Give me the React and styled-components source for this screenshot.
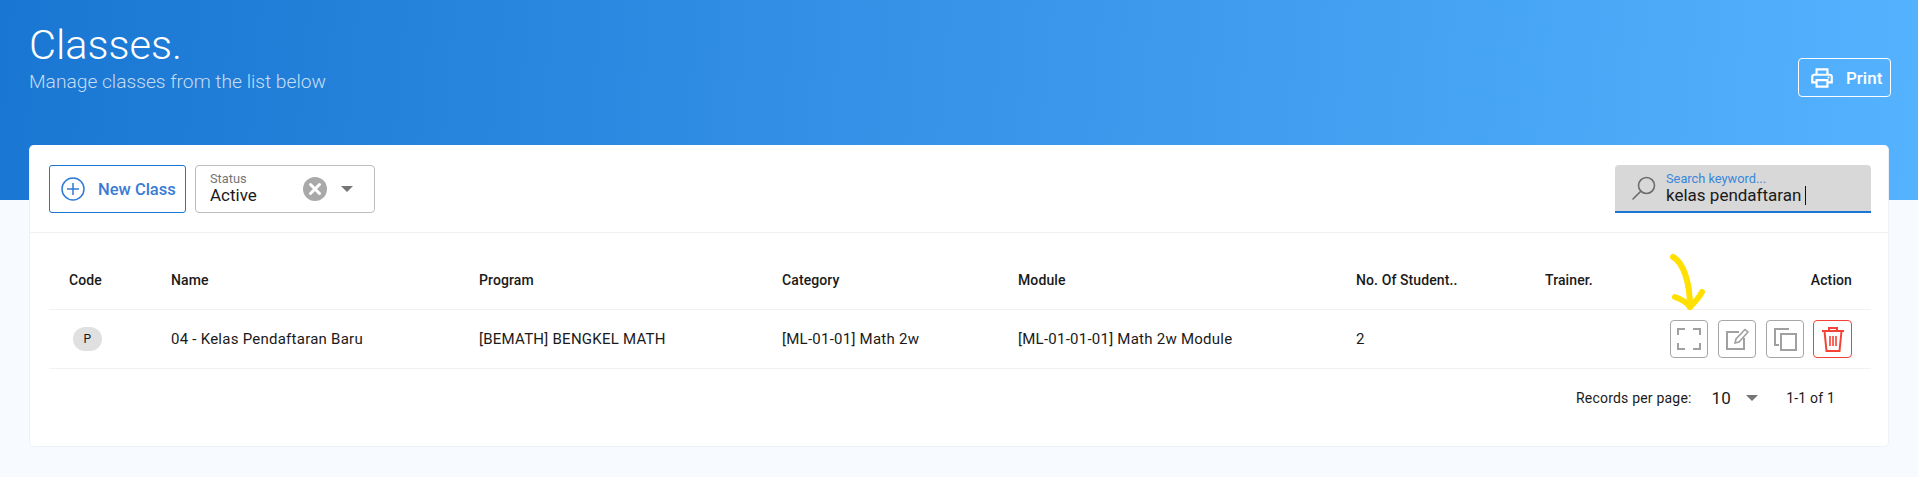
import React from "react";
import styled, {createGlobalStyle} from "styled-components";

const GlobalStyle = createGlobalStyle`
  html, body {
    margin: 0;
    padding: 0;
    background: #f7fbff;
    font-family: Roboto, "Liberation Sans", sans-serif;
    color: #1a1a1a;
    overflow: hidden;
  }
`

const Hero = styled.header`
  height: 200px;
  box-sizing: border-box;
  padding: 22px 27px 0 29px;
  display: flex;
  justify-content: space-between;
  align-items: flex-start;
  background: linear-gradient(95deg, #1976d2 0%, #54b2ff 100%);
  color: #fff;
`

const Title = styled.h1`
  margin: 0;
  font-size: 41.5px;
  line-height: 46px;
  font-weight: 300;
`

const Subtitle = styled.p`
  margin: 3px 0 0;
  font-size: 19.2px;
  line-height: 22px;
  font-weight: 300;
  color: rgba(255, 255, 255, 0.75);
`

const PrintButton = styled.button`
  margin-top: 36px;
  width: 93px;
  height: 39px;
  display: flex;
  align-items: center;
  gap: 11px;
  padding: 0 0 0 10px;
  background: transparent;
  border: 1px solid #fff;
  border-radius: 4px;
  color: #fff;
  font: 500 17px Roboto, sans-serif;
`

const Card = styled.main`
  margin: -55px 29px 0;
  height: 302px;
  box-sizing: border-box;
  background: #fff;
  border: 1px solid #eef1f5;
  border-top: 0;
  border-radius: 5px;
`

const Toolbar = styled.div`
  height: 88px;
  box-sizing: border-box;
  padding: 20px 17px 0 19px;
  display: flex;
  align-items: flex-start;
  gap: 9px;
  border-bottom: 1px solid #f1f2f4;
`

const NewButton = styled.button`
  width: 137px;
  height: 48px;
  display: flex;
  align-items: center;
  gap: 13px;
  padding: 0 0 0 11px;
  box-sizing: border-box;
  background: #fff;
  border: 1px solid #1976d2;
  border-radius: 3px;
  color: #3a7bd5;
  font: 500 16.5px Roboto, sans-serif;
`

const Select = styled.div`
  width: 180px;
  height: 48px;
  box-sizing: border-box;
  padding: 0 21px 0 14px;
  display: flex;
  align-items: center;
  border: 1px solid #bdbdbd;
  border-radius: 4px;
`

const SelectValue = styled.div`
  flex: 1;
  padding-bottom: 2px;
  font-size: 17px;
  line-height: 20px;
  small {
    display: block;
    font-size: 12.8px;
    line-height: 13px;
    color: #757575;
  }
`

const ClearDot = styled.span`
  width: 24px;
  height: 24px;
  display: flex;
  align-items: center;
  justify-content: center;
  border-radius: 50%;
  background: #a9a9a9;
  margin-right: 14px;
`

const Caret = styled.span`
  width: 0;
  height: 0;
  border-left: 6px solid transparent;
  border-right: 6px solid transparent;
  border-top: 6px solid #757575;
`

const SearchBox = styled.div`
  margin-left: auto;
  width: 256px;
  height: 48px;
  box-sizing: border-box;
  padding: 0 0 0 17px;
  display: flex;
  align-items: center;
  gap: 10px;
  background: #d8d8d8;
  border-bottom: 2px solid #1976d2;
  border-radius: 4px 4px 0 0;
`

const SearchText = styled.div`
  font-size: 17px;
  line-height: 20px;
  small {
    display: block;
    font-size: 12.8px;
    line-height: 13px;
    color: #3a86d8;
  }
  i {
    display: inline-block;
    width: 1px;
    height: 19px;
    margin-left: 4px;
    vertical-align: -4px;
    background: #111;
  }
`

const Table = styled.section`
  position: relative;
  margin: 0 17px 0 19px;
`

const Row = styled.div`
  display: grid;
  grid-template-columns: 102px 308px 303px 236px 338px 189px 100px 1fr;
  align-items: center;
  box-sizing: border-box;
  height: ${p => p.$head ? "77px" : "59px"};
  padding: ${p => p.$head ? "18px" : "0"} 19px 0 20px;
  border-bottom: 1px solid #f1f2f4;
  font-size: ${p => p.$head ? "14px" : "15px"};
  font-weight: ${p => p.$head ? 500 : 400};
  letter-spacing: ${p => p.$head ? "0.1px" : "0.25px"};
`

const End = styled.div`
  display: flex;
  justify-content: flex-end;
  gap: 10px;
`

const Chip = styled.span`
  margin-left: 4px;
  width: 29px;
  height: 24px;
  display: flex;
  align-items: center;
  justify-content: center;
  border-radius: 12px;
  background: #e0e0e0;
  font-size: 12px;
`

const IconButton = styled.button`
  width: ${p => p.$danger ? "39px" : "38px"};
  height: 38px;
  margin-left: ${p => p.$danger ? "-1px" : "0"};
  padding: 0;
  display: flex;
  align-items: center;
  justify-content: center;
  background: #fff;
  border: 1px solid ${p => p.$danger ? "#f44336" : "#a6a6a6"};
  border-radius: 4px;
  color: ${p => p.$danger ? "#f44336" : "#a0a0a0"};
`

const Arrow = styled.svg`
  position: absolute;
  left: 1618px;
  top: 19px;
  width: 50px;
  height: 70px;
`

const Footer = styled.div`
  height: 57px;
  display: flex;
  align-items: center;
  justify-content: flex-end;
  padding-right: 36px;
  font-size: 14px;
  letter-spacing: 0.2px;
`

const PageSize = styled.span`
  margin: 0 28px 0 20px;
  display: flex;
  align-items: center;
  gap: 15px;
  font-size: 17px;
`

const Printer = () => (
  <svg width="26" height="26" viewBox="0 0 24 24" fill="currentColor">
    <path d="M19 8h-1V3H6v5H5a3 3 0 0 0-3 3v6h4v4h12v-4h4v-6a3 3 0 0 0-3-3zM8 5h8v3H8V5zm8 14H8v-4h8v4zm2-4v-2H6v2H4v-4a1 1 0 0 1 1-1h14a1 1 0 0 1 1 1v4h-2z" />
    <circle cx="18" cy="11.5" r="1" />
  </svg>
)

const PlusCircle = () => (
  <svg width="24" height="24" viewBox="0 0 24 24" fill="none" stroke="#2f7ad6" strokeWidth="1.5">
    <circle cx="12" cy="12" r="11" />
    <path d="M12 6v12M6 12h12" />
  </svg>
)

const Cross = () => (
  <svg width="14" height="14" viewBox="0 0 14 14" stroke="#fff" strokeWidth="3" strokeLinecap="round">
    <path d="M2.500 2.500l9 9M11.500 2.500l-9 9" />
  </svg>
)

const Magnify = () => (
  <svg width="24" height="24" viewBox="0 0 24 24" fill="none" stroke="#6b6b6b" strokeWidth="1.6">
    <circle cx="14.500" cy="9.500" r="8" />
    <path d="M8.800 15.200L1 23" strokeLinecap="round" />
  </svg>
)

const Expand = () => (
  <svg width="24" height="24" viewBox="0 0 24 24" fill="none" stroke="currentColor" strokeWidth="2">
    <path d="M1 8V2h7M16 2h7v6M23 16v6h-7M8 22H1v-6" />
  </svg>
)

const Edit = () => (
  <svg width="24" height="24" viewBox="0 0 24 24" fill="none" stroke="currentColor" strokeWidth="2">
    <path d="M14 5H2v17h17V11" />
    <path d="M10 16l1-4L20 2.500l3 2.500-9 10z" strokeWidth="1.600" />
  </svg>
)

const Copy = () => (
  <svg width="24" height="24" viewBox="0 0 24 24" fill="none" stroke="currentColor" strokeWidth="2">
    <path d="M16 2H2v16h4" />
    <path d="M8 7h15v16H8z" />
  </svg>
)

const Trash = () => (
  <svg width="24" height="26" viewBox="0 0 24 26" fill="none" stroke="currentColor" strokeWidth="2">
    <path d="M1 5h22M8 5V2h8v3M3.500 5l2 20h13l2-20" />
    <path d="M9 10v10M12 10v10M15 10v10" strokeWidth="1.600" />
  </svg>
)

const headers = ["Code", "Name", "Program", "Category", "Module", "No. Of Student..", "Trainer."]

const App = () => {
  return <>
    <GlobalStyle />
    <Hero>
      <div>
        <Title>Classes.</Title>
        <Subtitle>Manage classes from the list below</Subtitle>
      </div>
      <PrintButton><Printer />Print</PrintButton>
    </Hero>
    <Card>
      <Toolbar>
        <NewButton><PlusCircle />New Class</NewButton>
        <Select>
          <SelectValue><small>Status</small>Active</SelectValue>
          <ClearDot><Cross /></ClearDot>
          <Caret />
        </Select>
        <SearchBox>
          <Magnify />
          <SearchText><small>Search keyword...</small>kelas pendaftaran<i /></SearchText>
        </SearchBox>
      </Toolbar>
      <Table>
        <Row $head>
          {headers.map(h => <div key={h}>{h}</div>)}
          <End>Action</End>
        </Row>
        <Row>
          <div><Chip>P</Chip></div>
          <div>04 - Kelas Pendaftaran Baru</div>
          <div>[BEMATH] BENGKEL MATH</div>
          <div>[ML-01-01] Math 2w</div>
          <div>[ML-01-01-01] Math 2w Module</div>
          <div>2</div>
          <div />
          <End>
            <IconButton><Expand /></IconButton>
            <IconButton><Edit /></IconButton>
            <IconButton><Copy /></IconButton>
            <IconButton $danger><Trash /></IconButton>
          </End>
        </Row>
        <Arrow viewBox="0 0 50 70" fill="none" stroke="#ffe000" strokeWidth="6" strokeLinecap="round" strokeLinejoin="round">
          <path d="M6 5C16 10 23 30 23 55" />
          <path d="M8 45C14 47 20 51 23 55C28 50 32 46 35 40" />
        </Arrow>
        <Footer>
          Records per page:
          <PageSize>10<Caret /></PageSize>
          1-1 of 1
        </Footer>
      </Table>
    </Card>
  </>
}

export default App
